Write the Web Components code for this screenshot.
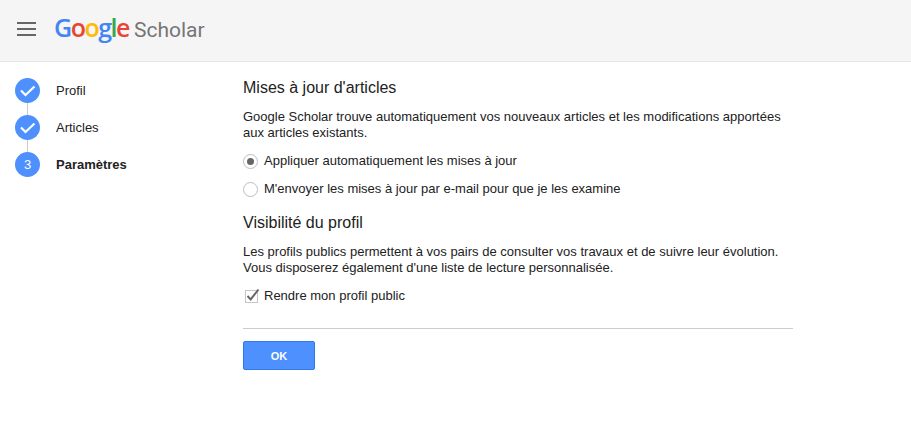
<!DOCTYPE html>
<html lang="fr">
<head>
<meta charset="utf-8">
<title>Google Scholar</title>
<style>
  html, body { margin: 0; background: #fff; }
  body { font: 13px/16px "Liberation Sans", Arial, sans-serif; color: #222; }
</style>
</head>
<body>
<gs-header></gs-header>
<gs-layout>
  <gs-steps slot="nav">
    <gs-step done>Profil</gs-step>
    <gs-step done>Articles</gs-step>
    <gs-step num="3" current>Paramètres</gs-step>
  </gs-steps>
  <gs-section heading="Mises à jour d'articles">
    <p>Google Scholar trouve automatiquement vos nouveaux articles et les modifications apportées aux articles existants.</p>
    <gs-radio checked>Appliquer automatiquement les mises à jour</gs-radio>
    <gs-radio>M'envoyer les mises à jour par e-mail pour que je les examine</gs-radio>
  </gs-section>
  <gs-section heading="Visibilité du profil">
    <p>Les profils publics permettent à vos pairs de consulter vos travaux et de suivre leur évolution. Vous disposerez également d'une liste de lecture personnalisée.</p>
    <gs-check checked>Rendre mon profil public</gs-check>
  </gs-section>
  <gs-footer>OK</gs-footer>
</gs-layout>
<script>
function shadow(el, html) { el.attachShadow({ mode: 'open' }).innerHTML = html; }

class GsHeader extends HTMLElement {
  connectedCallback() {
    if (this.shadowRoot) return;
    shadow(this, `
      <style>
        :host { display: flex; align-items: center; box-sizing: border-box; height: 62px; padding: 0 0 4px 17px; background: #f5f5f5; border-bottom: 1px solid #e5e5e5; }
        svg { display: block; }
        .logo { display: flex; align-items: baseline; margin-left: 18px; font-size: 25px; line-height: 30px; font-family: "Open Sans", sans-serif; }
        .g { letter-spacing: -1.5px; font-weight: 550; }
        .g b { font-weight: 550; }
        .s { margin-left: 5px; color: #757575; font-family: Roboto, sans-serif; font-size: 21px; }
      </style>
      <svg width="19" height="14" viewBox="0 0 19 14" fill="#666"><rect width="19" height="2"/><rect y="6" width="19" height="2"/><rect y="12" width="19" height="2"/></svg>
      <div class="logo">
        <span class="g"><b style="color:#4285f4">G</b><b style="color:#ea4335">o</b><b style="color:#fbbc05">o</b><b style="color:#4285f4">g</b><b style="color:#34a853">l</b><b style="color:#ea4335">e</b></span>
        <span class="s">Scholar</span>
      </div>`);
  }
}

class GsLayout extends HTMLElement {
  connectedCallback() {
    if (this.shadowRoot) return;
    shadow(this, `
      <style>
        :host { display: grid; grid-template-columns: 243px 550px; }
        .main { padding-top: 16px; }
        nav { padding: 16px 0 0 15px; }
      </style>
      <nav><slot name="nav"></slot></nav>
      <div class="main"><slot></slot></div>`);
  }
}

class GsSteps extends HTMLElement {
  connectedCallback() {
    if (this.shadowRoot) return;
    shadow(this, `
      <style>:host { display: flex; flex-direction: column; gap: 12px; }</style>
      <slot></slot>`);
  }
}

class GsStep extends HTMLElement {
  connectedCallback() {
    if (this.shadowRoot) return;
    const mark = this.hasAttribute('done')
      ? '<svg width="25" height="25" viewBox="0 0 25 25"><path d="M6 12.5l4.5 4.5 9-8.5" fill="none" stroke="#fff" stroke-width="2.2"/></svg>'
      : this.getAttribute('num');
    shadow(this, `
      <style>
        :host { display: flex; align-items: center; position: relative; gap: 16px; height: 25px; }
        :host(:not(:last-child))::after { content: ""; position: absolute; left: 12px; top: 25px; width: 1px; height: 12px; background: #ccc; }
        .dot { flex: none; width: 25px; height: 25px; border-radius: 50%; background: #4d90fe; color: #fff; display: flex; align-items: center; justify-content: center; font-size: 13px; }
        svg { display: block; }
        :host([current]) .label { font-weight: bold; }
      </style>
      <span class="dot">${mark}</span><span class="label"><slot></slot></span>`);
  }
}

class GsSection extends HTMLElement {
  connectedCallback() {
    if (this.shadowRoot) return;
    shadow(this, `
      <style>
        :host { display: block; margin-bottom: 10px; }
        h2 { margin: 0 0 11px; font-size: 16px; line-height: 20px; font-weight: normal; color: #222; }
        ::slotted(p) { margin: 0 0 6px; }
      </style>
      <h2>${this.getAttribute('heading')}</h2>
      <slot></slot>`);
  }
}

class GsRadio extends HTMLElement {
  connectedCallback() {
    if (this.shadowRoot) return;
    shadow(this, `
      <style>
        :host { display: flex; align-items: center; gap: 6px; height: 28px; }
        .r { box-sizing: border-box; width: 15px; height: 15px; border: 1px solid #bdbdbd; border-radius: 50%; background: #fff; display: flex; align-items: center; justify-content: center; }
        :host([checked]) .r::before { content: ""; width: 7px; height: 7px; border-radius: 50%; background: #666; }
      </style>
      <span class="r"></span><span><slot></slot></span>`);
  }
}

class GsCheck extends HTMLElement {
  connectedCallback() {
    if (this.shadowRoot) return;
    shadow(this, `
      <style>
        :host { display: flex; align-items: center; gap: 6px; height: 28px; }
        .c { position: relative; box-sizing: border-box; width: 13px; height: 13px; margin-left: 2px; border: 1px solid #c6c6c6; background: #fff; }
        svg { position: absolute; left: -1px; top: -4px; }
      </style>
      <span class="c"><svg width="16" height="16" viewBox="0 0 16 16"><path d="M2.5 9l3.2 3.4L13.5 2.5" fill="none" stroke="#666" stroke-width="2"/></svg></span><span><slot></slot></span>`);
  }
}

class GsFooter extends HTMLElement {
  connectedCallback() {
    if (this.shadowRoot) return;
    shadow(this, `
      <style>
        :host { display: block; margin-top: 18px; border-top: 1px solid #ccc; padding-top: 12px; }
        button { display: block; box-sizing: border-box; width: 72px; height: 29px; padding: 0; font: bold 11px "Liberation Sans", Arial, sans-serif; color: #fff; background: #4d90fe; border: 1px solid #3079ed; border-radius: 2px; }
      </style>
      <button><slot></slot></button>`);
  }
}

customElements.define('gs-header', GsHeader);
customElements.define('gs-layout', GsLayout);
customElements.define('gs-steps', GsSteps);
customElements.define('gs-step', GsStep);
customElements.define('gs-section', GsSection);
customElements.define('gs-radio', GsRadio);
customElements.define('gs-check', GsCheck);
customElements.define('gs-footer', GsFooter);
</script>
</body>
</html>
